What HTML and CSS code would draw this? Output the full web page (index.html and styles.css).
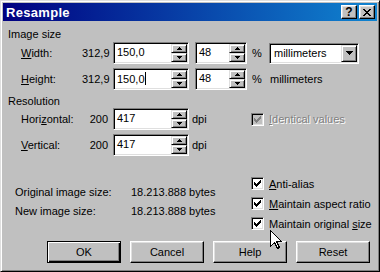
FILE: index.html
```html
<!DOCTYPE html>
<html lang="en">
  <head>
    <title>Resample</title>
    <link rel="stylesheet" href="styles.css">
  </head>
  <body>
    <div class="window">
      <div class="titlebar">
        <span class="title">Resample</span>
        <div class="tbtns">
          <span class="tbtn">?</span>
          <span class="tbtn">
            <svg width="8" height="7" viewBox="0 0 8 7"><path d="M0 0h2v1h1v1h2V1h1V0h2v1H7v1H6v1H5v1h1v1h1v1h1v1H6V6H5V5H3v1H2v1H0V6h1V5h1V4h1V3H2V2H1V1H0z"/></svg>
          </span>
        </div>
      </div>

      <div class="content">
        <div class="group">Image size</div>

        <div class="row">
          <span class="lbl"><u>W</u>idth:</span>
          <span class="val">312,9</span>
          <div class="spin">
            <span class="txt">150,0</span>
            <div class="arrows">
              <span class="arr"><svg width="5" height="3"><path d="M2 0h1v1h1v1h1v1H0V2h1V1h1z"/></svg></span>
              <span class="arr"><svg width="5" height="3"><path d="M0 0h5v1H4v1H3v1H2V2H1V1H0z"/></svg></span>
            </div>
          </div>
          <div class="spin narrow">
            <span class="txt">48</span>
            <div class="arrows">
              <span class="arr"><svg width="5" height="3"><path d="M2 0h1v1h1v1h1v1H0V2h1V1h1z"/></svg></span>
              <span class="arr"><svg width="5" height="3"><path d="M0 0h5v1H4v1H3v1H2V2H1V1H0z"/></svg></span>
            </div>
          </div>
          <span class="pct">%</span>
          <div class="combo">
            <span class="txt">millimeters</span>
            <span class="drop"><svg width="7" height="4"><path d="M0 0h7v1H6v1H5v1H4v1H3V3H2V2H1V1H0z"/></svg></span>
          </div>
        </div>

        <div class="row">
          <span class="lbl"><u>H</u>eight:</span>
          <span class="val">312,9</span>
          <div class="spin">
            <span class="txt">150,0<i class="caret"></i></span>
            <div class="arrows">
              <span class="arr"><svg width="5" height="3"><path d="M2 0h1v1h1v1h1v1H0V2h1V1h1z"/></svg></span>
              <span class="arr"><svg width="5" height="3"><path d="M0 0h5v1H4v1H3v1H2V2H1V1H0z"/></svg></span>
            </div>
          </div>
          <div class="spin narrow">
            <span class="txt">48</span>
            <div class="arrows">
              <span class="arr"><svg width="5" height="3"><path d="M2 0h1v1h1v1h1v1H0V2h1V1h1z"/></svg></span>
              <span class="arr"><svg width="5" height="3"><path d="M0 0h5v1H4v1H3v1H2V2H1V1H0z"/></svg></span>
            </div>
          </div>
          <span class="pct">%</span>
          <span class="unit-text">millimeters</span>
        </div>

        <div class="group">Resolution</div>

        <div class="row first">
          <span class="lbl">Hori<u>z</u>ontal:</span>
          <span class="val">200</span>
          <div class="spin">
            <span class="txt">417</span>
            <div class="arrows">
              <span class="arr"><svg width="5" height="3"><path d="M2 0h1v1h1v1h1v1H0V2h1V1h1z"/></svg></span>
              <span class="arr"><svg width="5" height="3"><path d="M0 0h5v1H4v1H3v1H2V2H1V1H0z"/></svg></span>
            </div>
          </div>
          <span class="dpi">dpi</span>
          <label class="check disabled">
            <span class="box"><svg width="7" height="7"><path d="M0 2h1v3H0zM1 3h1v3H1zM2 4h1v3H2zM3 3h1v3H3zM4 2h1v3H4zM5 1h1v3H5zM6 0h1v3H6z"/></svg></span>
            <span><u>I</u>dentical values</span>
          </label>
        </div>

        <div class="row">
          <span class="lbl"><u>V</u>ertical:</span>
          <span class="val">200</span>
          <div class="spin">
            <span class="txt">417</span>
            <div class="arrows">
              <span class="arr"><svg width="5" height="3"><path d="M2 0h1v1h1v1h1v1H0V2h1V1h1z"/></svg></span>
              <span class="arr"><svg width="5" height="3"><path d="M0 0h5v1H4v1H3v1H2V2H1V1H0z"/></svg></span>
            </div>
          </div>
          <span class="dpi">dpi</span>
        </div>

        <div class="lower">
          <div class="info">
            <div class="info-row"><span class="info-lbl">Original image size:</span><span>18.213.888 bytes</span></div>
            <div class="info-row"><span class="info-lbl">New image size:</span><span>18.213.888 bytes</span></div>
          </div>
          <div class="checks">
            <label class="check">
              <span class="box"><svg width="7" height="7"><path d="M0 2h1v3H0zM1 3h1v3H1zM2 4h1v3H2zM3 3h1v3H3zM4 2h1v3H4zM5 1h1v3H5zM6 0h1v3H6z"/></svg></span>
              <span><u>A</u>nti-alias</span>
            </label>
            <label class="check">
              <span class="box"><svg width="7" height="7"><path d="M0 2h1v3H0zM1 3h1v3H1zM2 4h1v3H2zM3 3h1v3H3zM4 2h1v3H4zM5 1h1v3H5zM6 0h1v3H6z"/></svg></span>
              <span><u>M</u>aintain aspect ratio</span>
            </label>
            <label class="check">
              <span class="box"><svg width="7" height="7"><path d="M0 2h1v3H0zM1 3h1v3H1zM2 4h1v3H2zM3 3h1v3H3zM4 2h1v3H4zM5 1h1v3H5zM6 0h1v3H6z"/></svg></span>
              <span>Maintain original <u>s</u>ize</span>
            </label>
          </div>
        </div>

        <div class="buttons">
          <span class="btn default">OK</span>
          <span class="btn">Cancel</span>
          <span class="btn">Help</span>
          <span class="btn">Reset</span>
        </div>
      </div>

      <!-- mouse pointer over the dialog -->
      <svg class="cursor" width="12" height="19" viewBox="0 0 12 19">
        <path d="M0.5 0.5V16.5L4.5 12.5L7.5 18.5L9.5 17.5L6.5 11.5H11.5Z" fill="#fff" stroke="#000" stroke-width="1" shape-rendering="crispEdges"/>
      </svg>
    </div>
  </body>
</html>
```

FILE: styles.css
```css
* {
  box-sizing: border-box;
}
body {
  margin: 0;
  background: #c0c0c0;
  font-family: "Liberation Sans", Arial, sans-serif;
  font-size: 11px;
  color: #000;
}
u {
  text-decoration: underline;
  text-underline-offset: 1px;
}

.window {
  position: relative;
  width: 380px;
  height: 272px;
  background: #c0c0c0;
  border: 1px solid;
  border-color: #dfdfdf #000 #000 #dfdfdf;
  box-shadow: inset 1px 1px #fff, inset -1px -1px #808080;
  padding: 2px;
  white-space: nowrap;
}

.titlebar {
  height: 18px;
  background: linear-gradient(to right, #000080, #1084d0);
  display: flex;
  align-items: center;
  justify-content: space-between;
  padding: 0 2px 0 3px;
}
.title {
  color: #fff;
  font-weight: bold;
  font-size: 13px;
  letter-spacing: 0.3px;
}
.tbtns {
  display: flex;
  gap: 2px;
}
.tbtn {
  width: 16px;
  height: 14px;
  background: #c0c0c0;
  border: 1px solid;
  border-color: #fff #000 #000 #fff;
  box-shadow: inset -1px -1px #808080, inset 1px 1px #dfdfdf;
  display: flex;
  align-items: center;
  justify-content: center;
  font-weight: bold;
  font-size: 12px;
  line-height: 12px;
}

.content {
  padding: 0 7px 0 5px;
}
.group {
  height: 14px;
  line-height: 14px;
  margin-top: 4px;
}
.group:first-child {
  margin-top: 6px;
}

.row {
  display: flex;
  align-items: center;
  height: 22px;
  margin-top: 4px;
}
.group + .row {
  margin-top: 1px;
}
.row.first {
  margin-top: 0;
}
.lbl {
  width: 74px;
  padding-left: 13px;
}
.val {
  width: 26px;
  text-align: right;
}

/* sunken edit fields */
.spin,
.combo {
  display: flex;
  background: #fff;
  border: 1px solid;
  border-color: #808080 #fff #fff #808080;
  box-shadow: inset 1px 1px #000, inset -1px -1px #dfdfdf;
  padding: 1px;
}
.spin {
  width: 76px;
  height: 22px;
  margin-left: 5px;
}
.spin.narrow {
  width: 52px;
  margin-left: 6px;
}
.txt {
  flex: 1;
  padding: 2px 0 0 2px;
  line-height: 13px;
}
.caret {
  display: inline-block;
  width: 1px;
  height: 13px;
  background: #000;
  vertical-align: -2px;
}
.arrows {
  width: 16px;
  display: flex;
  flex-direction: column;
}
.arr {
  height: 9px;
  background: #c0c0c0;
  border: 1px solid;
  border-color: #dfdfdf #000 #000 #dfdfdf;
  box-shadow: inset 1px 1px #fff, inset -1px -1px #808080;
  display: flex;
  align-items: center;
  justify-content: center;
}
.pct {
  width: 17px;
  margin-left: 5px;
}
.combo {
  width: 90px;
  height: 21px;
  align-items: center;
}
.combo .txt {
  padding: 0 0 0 3px;
}
.drop {
  width: 16px;
  height: 17px;
  background: #c0c0c0;
  border: 1px solid;
  border-color: #dfdfdf #000 #000 #dfdfdf;
  box-shadow: inset 1px 1px #fff, inset -1px -1px #808080;
  display: flex;
  align-items: center;
  justify-content: center;
}
.unit-text {
  margin-left: 1px;
}
.dpi {
  width: 62px;
  padding-left: 3px;
}

/* checkboxes */
.check {
  display: flex;
  align-items: center;
  gap: 5px;
  height: 13px;
}
.box {
  flex: none;
  width: 13px;
  height: 13px;
  background: #fff;
  border: 1px solid;
  border-color: #808080 #fff #fff #808080;
  box-shadow: inset 1px 1px #000, inset -1px -1px #dfdfdf;
  display: flex;
  align-items: center;
  justify-content: center;
}
.check.disabled {
  color: #808080;
  text-shadow: 1px 1px #fff;
}
.check.disabled .box {
  background: #c0c0c0;
}
.check.disabled svg {
  fill: #808080;
}

.lower {
  display: flex;
  margin-top: 21px;
}
.info {
  flex: none;
  width: 243px;
  padding: 8px 0 0 7px;
}
.info-row {
  display: flex;
  height: 14px;
  line-height: 14px;
  margin-bottom: 5px;
}
.info-lbl {
  width: 116px;
}
.checks {
  flex: none;
  display: flex;
  flex-direction: column;
  gap: 7px;
}

.buttons {
  display: flex;
  justify-content: flex-end;
  gap: 9px;
  margin-top: 11px;
}
.btn {
  width: 74px;
  height: 22px;
  background: #c0c0c0;
  border: 1px solid;
  border-color: #fff #000 #000 #fff;
  box-shadow: inset -1px -1px #808080, inset 1px 1px #dfdfdf;
  display: flex;
  align-items: center;
  justify-content: center;
}
.btn.default {
  border-color: #000;
  box-shadow: inset 1px 1px #fff, inset -1px -1px #000, inset -2px -2px #808080;
}

.cursor {
  position: absolute;
  left: 269px;
  top: 229px;
}
```
